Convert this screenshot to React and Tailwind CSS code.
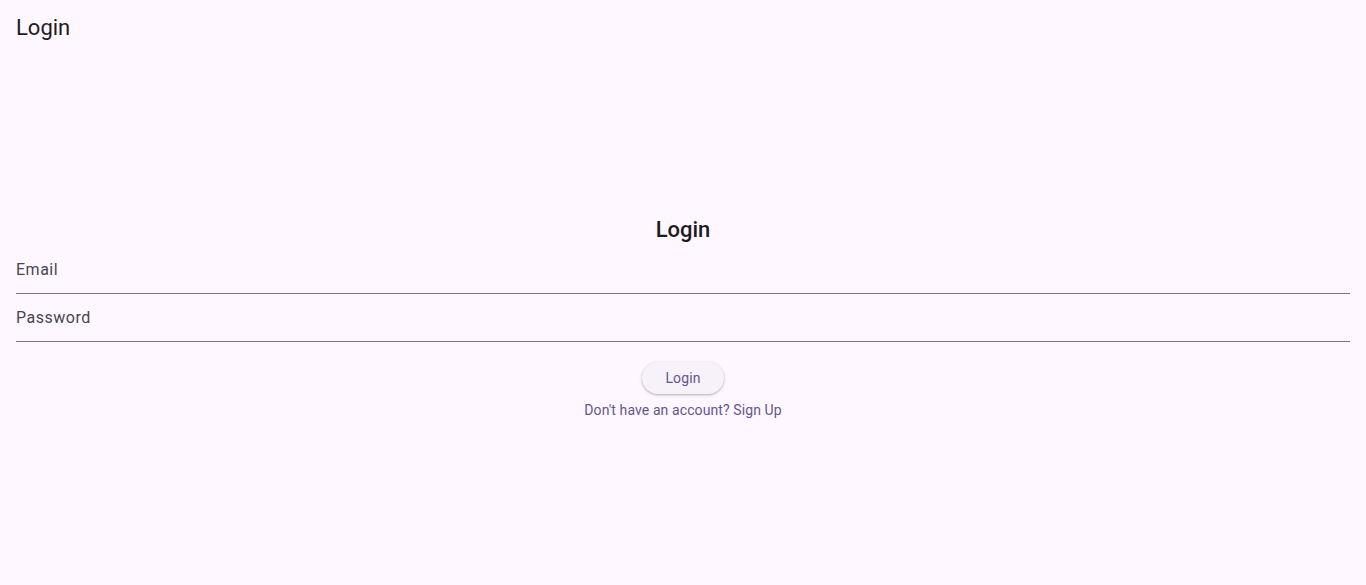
export default function App() {
  return (
    <div className="min-h-[585px] flex flex-col bg-[#fef7ff] text-[#1d1b20]" style={{ fontFamily: 'Roboto, "Noto Sans", sans-serif' }}>
      <header className="h-14 flex items-center px-4">
        <h1 className="text-[22px] leading-7">Login</h1>
      </header>

      <main className="flex-1 flex flex-col justify-center px-4 pb-px">
        <h2 className="text-center text-[22px] leading-8 font-medium">Login</h2>
        <Field label="Email" />
        <Field label="Password" />
        <div className="mt-5 flex flex-col items-center">
          <button className="h-8 px-[23px] rounded-full bg-[#f7f2fa] text-[#65558f] text-sm tracking-[0.1px] shadow-[0_1px_2px_rgba(0,0,0,0.2),0_1px_3px_1px_rgba(0,0,0,0.08)]">
            Login
          </button>
          <button className="h-8 px-3 text-[#65558f] text-sm tracking-[0.1px]">
            Don't have an account? Sign Up
          </button>
        </div>
      </main>
    </div>
  );
}

function Field({ label }) {
  return (
    <div className="h-12 flex items-center border-b border-[#79747e]">
      <span className="text-base leading-6 tracking-[0.5px] text-[#49454f]">{label}</span>
    </div>
  );
}
